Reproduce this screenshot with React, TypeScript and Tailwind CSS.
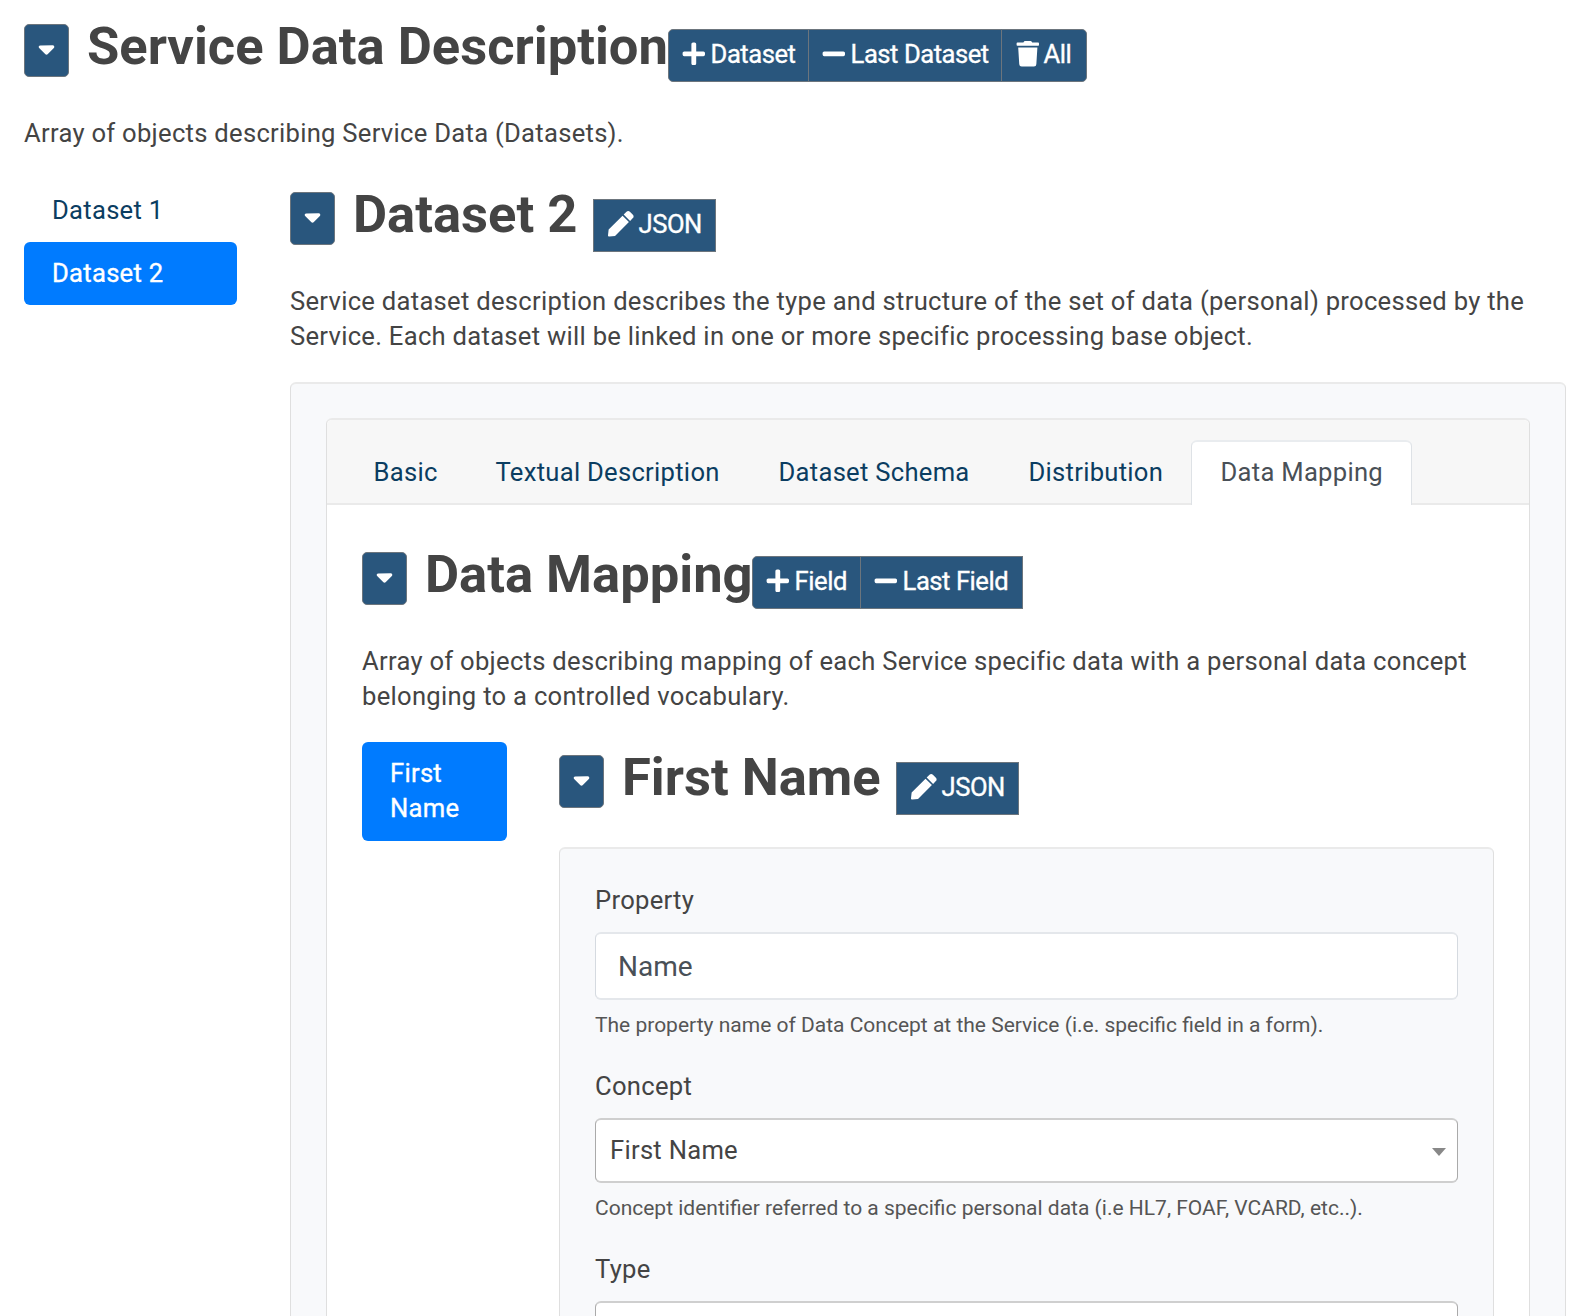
import { FaPlus, FaMinus, FaTrash, FaPen } from 'react-icons/fa';
import { FaCaretDown } from 'react-icons/fa6';
import type { ReactNode } from 'react';

function Toggle() {
  return (
    <button className="flex h-[53px] w-[45px] shrink-0 items-center justify-center rounded-[5px] border border-[#6c757d] bg-[#29567d] pb-[5px] text-white">
      <FaCaretDown size={25} />
    </button>
  );
}

function Action({ icon, label, className }: { icon: ReactNode; label: string; className: string }) {
  return (
    <button className={`flex h-[53px] shrink-0 items-center whitespace-nowrap border border-[#6c757d] bg-[#29567d] pb-[3px] text-[25.6px] font-normal tracking-[-0.47px] text-white ${className}`}>
      {icon}
      <span className="[-webkit-text-stroke:0.35px_white]">{label}</span>
    </button>
  );
}

function Title({ children, className }: { children: string; className: string }) {
  return <h3 className={`h-[53px] shrink-0 whitespace-nowrap text-[52.5px] font-bold leading-[44px] tracking-[0px] text-[#444] ${className}`}>{children}</h3>;
}

function Caption({ children }: { children: string }) {
  return <p className="mt-[8px] h-[35px] text-[21px] leading-[34px] tracking-[0px] text-[#555]">{children}</p>;
}

const tabs = [
  { label: 'Basic', className: 'w-[122px]' },
  { label: 'Textual Description', className: 'w-[283px]' },
  { label: 'Dataset Schema', className: 'w-[250px]' },
  { label: 'Distribution', className: 'w-[191px]' },
];

export default function App() {
  return (
    <div className="h-[1316px] w-[1592px] overflow-hidden bg-white pl-6 pt-6 font-['Roboto',sans-serif] text-[25.6px] leading-[35px] tracking-[0.28px] text-[#444]">
      <header className="flex">
        <Toggle />
        <Title className="ml-[18px] w-[581px]">Service Data Description</Title>
        <div className="mt-[5px] flex">
          <Action icon={<FaPlus size={25.6} />} label="Dataset" className="w-[141px] gap-[4px] rounded-l-[5px] pl-[12px]" />
          <Action icon={<FaMinus size={25.6} />} label="Last Dataset" className="-ml-px w-[194px] gap-[4px] pl-[12px]" />
          <Action icon={<FaTrash size={25.6} />} label="All" className="-ml-px w-[86px] gap-[3px] rounded-r-[5px] pl-[13px]" />
        </div>
      </header>
      <p className="mt-[34px]">Array of objects describing Service Data (Datasets).</p>

      <div className="mt-[28px] flex">
        <nav className="w-[213px] shrink-0">
          <div className="h-[63px] pl-7 pt-[14px] text-[#0b3d61]">Dataset 1</div>
          <div className="h-[63px] rounded-[6px] bg-[#007bff] pl-7 pt-[14px] text-white [-webkit-text-stroke:0.35px_white]">Dataset 2</div>
        </nav>

        <main className="ml-[53px] w-[1276px] shrink-0 pt-[13px]">
          <div className="flex">
            <Toggle />
            <Title className="ml-[18px] w-[240px]">Dataset 2</Title>
            <Action icon={<FaPen size={25.6} />} label="JSON" className="mt-[7px] w-[123px] gap-[5px] pl-[14px]" />
          </div>
          <p className="mt-[32px] whitespace-nowrap">
            Service dataset description describes the type and structure of the set of data (personal) processed by the<br />
            Service. Each dataset will be linked in one or more specific processing base object.
          </p>

          <section className="mt-[28px] h-[1000px] rounded-[6px] border border-t-2 border-[#dfdfdf] border-t-[#eaeaea] bg-[#f8f9fb] px-[35px] pt-[34px]">
            <div className="h-[1000px] rounded-t-[6px] border border-t-2 border-[#dfdfdf] border-t-[#eaeaea] bg-white">
              <div className="flex h-[85px] rounded-t-[5px] border-b-2 border-[#eaeaea] bg-[#f7f7f7] pl-[17px] pt-5">
                {tabs.map((t) => (
                  <div key={t.label} className={`whitespace-nowrap pl-[29.5px] pt-[15px] text-[#0b3d61] ${t.className}`}>{t.label}</div>
                ))}
                <div className="-mb-0.5 ml-[1px] w-[221px] rounded-t-[6px] border border-b-0 border-t-2 border-[#dee2e6] border-t-[#e9ecef] bg-white pl-[28.5px] pt-[13px] text-[#495057]">Data Mapping</div>
              </div>

              <div className="px-[35px] pt-[47px]">
                <div className="flex">
                  <Toggle />
                  <Title className="ml-[18px] w-[327px]">Data Mapping</Title>
                  <div className="mt-[4px] flex">
                    <Action icon={<FaPlus size={25.6} />} label="Field" className="w-[109px] gap-[4px] rounded-l-[5px] pl-[12px]" />
                    <Action icon={<FaMinus size={25.6} />} label="Last Field" className="-ml-px w-[163px] gap-[4px] pl-[12px]" />
                  </div>
                </div>
                <p className="mt-[35px] whitespace-nowrap">
                  Array of objects describing mapping of each Service specific data with a personal data concept<br />
                  belonging to a controlled vocabulary.
                </p>
                <div className="mt-[28px] flex">
                  <div className="h-[99px] w-[145px] shrink-0 rounded-[6px] bg-[#007bff] pl-[28px] pt-[14px] text-white [-webkit-text-stroke:0.35px_white]">First<br />Name</div>
                  <div className="ml-[52px] w-[935px] shrink-0 pt-[13px]">
                    <div className="flex">
                      <Toggle />
                      <Title className="ml-[18px] w-[274px]">First Name</Title>
                      <Action icon={<FaPen size={25.6} />} label="JSON" className="mt-[7px] w-[123px] gap-[5px] pl-[14px]" />
                    </div>
                    <div className="mt-[32px] h-[700px] rounded-[6px] border border-t-2 border-[#dfdfdf] border-t-[#eaeaea] bg-[#f8f9fb] px-[35px] pt-[34px]">
                      <div>Property</div>
                      <div className="mt-[14px] h-[68px] rounded-[6px] border border-y-2 border-[#d5dae0] border-y-[#e4e7eb] bg-white pl-[22px] pt-[15px] text-[28px] tracking-[0px] text-[#495057]">Name</div>
                      <Caption>The property name of Data Concept at the Service (i.e. specific field in a form).</Caption>
                      <div className="mt-[26px]">Concept</div>
                      <div className="mt-[14px] flex h-[65px] justify-between rounded-[6px] border border-y-2 border-[#aaa] border-y-[#cfcfcf] bg-white pl-[14px] pr-[11px] pt-[13px]">
                        <span>First Name</span>
                        <span className="mt-[15px] h-0 w-0 border-x-[7px] border-t-[8px] border-x-transparent border-t-[#888]" />
                      </div>
                      <Caption>Concept identifier referred to a specific personal data (i.e HL7, FOAF, VCARD, etc..).</Caption>
                      <div className="mt-[26px]">Type</div>
                      <div className="mt-[14px] h-[65px] rounded-[6px] border border-y-2 border-[#aaa] border-y-[#cfcfcf] bg-white" />
                    </div>
                  </div>
                </div>
              </div>
            </div>
          </section>
        </main>
      </div>
    </div>
  );
}
